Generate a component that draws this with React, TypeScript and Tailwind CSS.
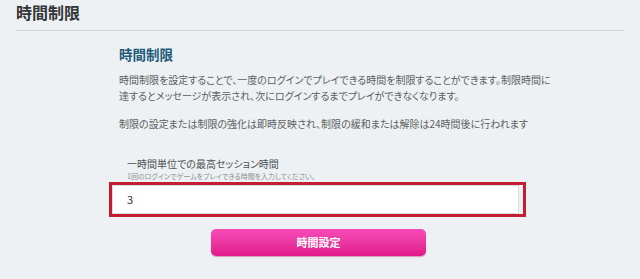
import React from 'react';

const App = () => {
  return (
    <div className="min-h-screen bg-[#eef1f3] font-['Noto_Sans_CJK_JP','Noto_Sans',sans-serif] [font-feature-settings:'palt']">
      <div className="mx-4 h-[31px] border-b border-[#cfd3d6] pt-[1px]">
        <h1 className="text-[16px] leading-[22px] font-bold text-[#333638]">時間制限</h1>
      </div>

      <div className="ml-[109px] w-[417px] pt-[13px]">
        <h2 className="pl-[10px] text-[13.5px] leading-[20px] font-bold text-[#1d5b78]">時間制限</h2>

        <p className="mt-[8px] pl-[10px] text-[10px] leading-[16px] text-[#5a5f62] whitespace-nowrap">
          時間制限を設定することで、一度のログインでプレイできる時間を制限することができます。制限時間に
          <br />
          達するとメッセージが表示され、次にログインするまでプレイができなくなります。
        </p>
        <p className="mt-[12px] pl-[10px] text-[10px] leading-[16px] text-[#5a5f62] whitespace-nowrap">
          制限の設定または制限の強化は即時反映され、制限の緩和または解除は24時間後に行われます
        </p>

        <div className="mt-[25px] pl-[18px]">
          <div className="text-[10px] leading-[14px] text-[#4a4f52]">一時間単位での最高セッション時間</div>
          <div className="text-[7px] leading-[10px] text-[#8c9093]">1回のログインでゲームをプレイできる時間を入力してください。</div>
        </div>

        <div className="mt-[1px] h-[35px] border-[3px] border-[#c41c30] pr-[4px]">
          <div className="flex h-full items-center border border-[#d9dde0] bg-white pl-[14px] text-[11px] text-[#333]">
            3
          </div>
        </div>

        <div className="mt-[11px] pl-[102px]">
          <button className="h-[27px] w-[215px] rounded-[5px] bg-gradient-to-b from-[#f64bb8] to-[#e0188a] text-[11px] font-bold text-white shadow-[0_1px_1px_rgba(150,0,80,0.35)]">
            時間設定
          </button>
        </div>
      </div>
    </div>
  );
};

export default App;
